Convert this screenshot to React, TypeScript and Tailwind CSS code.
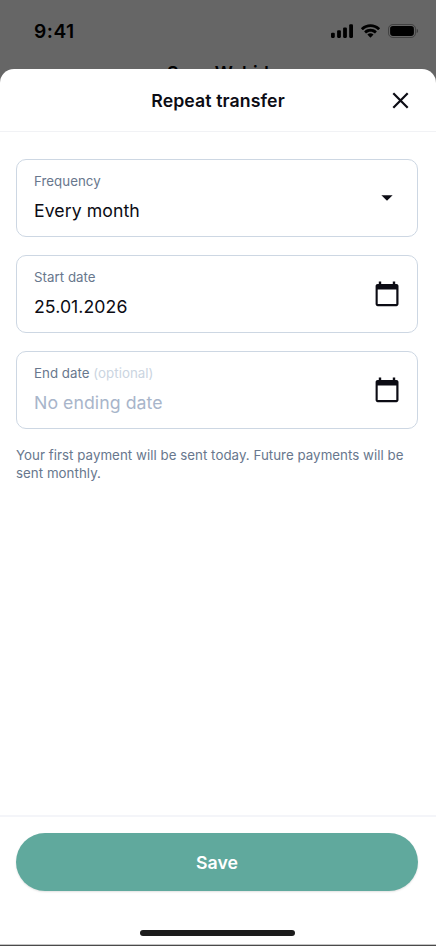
import { useState } from "react";
import type { ReactNode } from "react";

const StatusBar = () => (
  <div className="flex h-[62px] items-center justify-between pl-[34px] pr-[18px]">
    <span className="pb-px text-[19.2px] font-semibold leading-6 tracking-[0.5px]">9:41</span>
    <div className="flex items-center gap-[8px]">
      <svg width="22" height="14" viewBox="0 0 22 14">
        <rect x="0" y="8.7" width="3.8" height="5.2" rx="1.1" />
        <rect x="6.1" y="6.2" width="3.8" height="7.7" rx="1.1" />
        <rect x="12.1" y="3.4" width="3.8" height="10.5" rx="1.1" />
        <rect x="18.2" y="0.2" width="3.8" height="13.7" rx="1.1" />
      </svg>
      <svg width="19" height="14" viewBox="0 0 17 12.3">
        <path d="M8.5 2.6c2.5 0 4.8.9 6.6 2.6.1.1.3.1.5 0L16.9 3.9c.1-.1.1-.4 0-.5-4.7-4.5-12.1-4.5-16.8 0-.1.1-.1.4 0 .5l1.3 1.3c.2.1.4.1.5 0 1.8-1.7 4.1-2.6 6.6-2.6z" />
        <path d="M8.5 6.8c1.4 0 2.7.5 3.7 1.4.1.2.4.2.5 0l1.3-1.3c.1-.1.1-.4 0-.5-3.1-2.9-7.9-2.9-11 0-.1.1-.1.4 0 .5l1.3 1.3c.1.2.4.2.5 0 1-.9 2.3-1.4 3.7-1.4z" />
        <path d="M11 9.6c.1-.1.1-.4 0-.5-1.5-1.2-3.6-1.2-5.1 0-.1.1-.1.4 0 .5l2.3 2.3c.1.1.4.1.5 0z" />
      </svg>
      <svg width="30" height="14" viewBox="0 0 30 14">
        <rect x="0.5" y="0.5" width="27" height="13" rx="4.3" fill="none" stroke="#000" strokeOpacity="0.35" />
        <rect x="2.1" y="2.1" width="23.8" height="9.8" rx="2.8" />
        <path d="M28.7 4.8v4.4c.9-.4 1.4-1.2 1.4-2.2s-.5-1.8-1.4-2.2z" fillOpacity="0.4" />
      </svg>
    </div>
  </div>
);

const CalendarIcon = () => (
  <svg width="24" height="26" viewBox="0 0 24 26" fill="#0c0c14">
    <path d="M3.8.6h2.4V3h11.6V.6h2.4V3h1.2c1.2 0 2.1.9 2.1 2.1v18c0 1.2-.9 2.1-2.1 2.1H2.7c-1.2 0-2.1-.9-2.1-2.1v-18C.6 3.9 1.5 3 2.7 3h1.1zM2.7 8.6V23h18.6V8.6z" />
  </svg>
);

const CaretIcon = () => (
  <svg width="12" height="6" viewBox="0 0 12 6" fill="#0c0c14">
    <path d="M.4.2h11.2L6 5.8z" />
  </svg>
);

type FieldProps = {
  label: string;
  hint?: string;
  value?: string;
  placeholder?: string;
  icon: ReactNode;
};

const Field = ({ label, hint, value, placeholder, icon }: FieldProps) => (
  <button
    type="button"
    className="flex h-[78px] w-full items-center justify-between rounded-[10px] border border-[#cdd7e3] pl-[17px] pr-[18px] text-left"
  >
    <span className="flex flex-col">
      <span className="-mt-px text-[13.3px] leading-[18px] tracking-[0.03px] text-[#68778d]">
        {label}
        {hint && <span className="text-[#cbd5e1]"> {hint}</span>}
      </span>
      <span
        className={`mt-[9px] text-[17.7px] leading-6 tracking-[0.06px] ${value ? "text-[#0c0c14]" : "text-[#a8b5ca]"}`}
      >
        {value || placeholder}
      </span>
    </span>
    <span className="flex w-6 justify-center">{icon}</span>
  </button>
);

export default function App() {
  const [startDate] = useState("25.01.2026");
  const [endDate] = useState("");

  return (
    <div className="flex h-[946px] w-[436px] flex-col overflow-hidden bg-[#666666] font-['Inter',sans-serif] text-black">
      <div className="h-[69px]">
        <StatusBar />
        <p className="-mt-px text-center text-[17.7px] font-semibold leading-6 tracking-[0.1px]">Sana Wahid</p>
      </div>

      <div className="relative flex h-[876px] flex-col rounded-t-[14px] border-b border-[#c4c4c4] bg-white">
        <header className="grid h-[63px] grid-cols-[60px_1fr_60px] items-center border-b border-[#f1f2f5]">
          <h1 className="col-start-2 pt-[2px] text-center text-[17.7px] font-semibold leading-6 tracking-[0.1px] text-[#0c0c14]">
            Repeat transfer
          </h1>
          <button type="button" aria-label="Close" className="pl-[16px]">
            <svg width="17" height="17" viewBox="0 0 17 17" fill="none" stroke="#0c0c14" strokeWidth="2.2">
              <path d="M1.3 1.3l14.4 14.4M15.7 1.3L1.3 15.7" />
            </svg>
          </button>
        </header>

        <main className="flex flex-1 flex-col gap-[18px] pl-4 pr-[18px] pt-[27px]">
          <Field label="Frequency" value="Every month" icon={<CaretIcon />} />
          <Field label="Start date" value={startDate} icon={<CalendarIcon />} />
          <Field
            label="End date"
            hint="(optional)"
            value={endDate}
            placeholder="No ending date"
            icon={<CalendarIcon />}
          />
          <p className="-mt-px text-[13.3px] leading-[18px] tracking-[0.04px] text-[#68778d]">
            Your first payment will be sent today. Future payments will be sent monthly.
          </p>
        </main>

        <footer className="flex h-[129px] flex-col items-center border-t-2 border-[#f4f5f9] pl-4 pr-[18px] pt-4">
          <button
            type="button"
            className="h-[58px] w-full rounded-full bg-[#60a99d] pt-[2px] text-[17.7px] font-semibold text-white shadow-[0_1px_2px_rgba(0,0,0,0.12)]"
          >
            Save
          </button>
          <div className="mt-[39px] h-[6px] w-[155px] rounded-full bg-[#1c1c1c]" />
        </footer>
      </div>
      <div className="h-px bg-[#4a4a4a]" />
    </div>
  );
}
